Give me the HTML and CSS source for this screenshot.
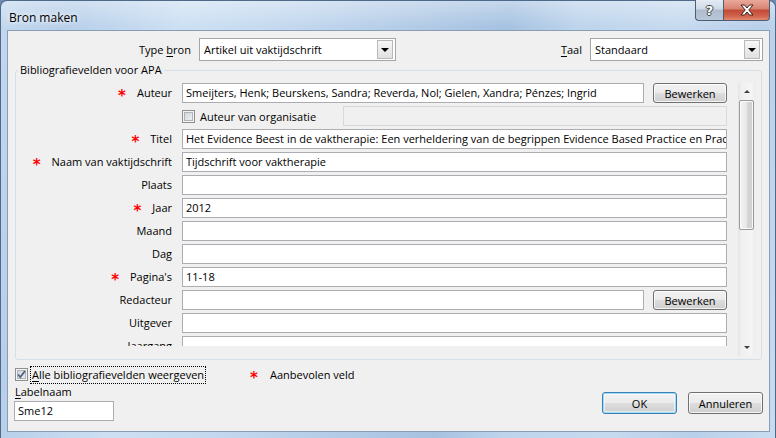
FILE: index.html
```html
<!DOCTYPE html>
<html lang="nl">
<head>
<meta charset="utf-8">
<title>Bron maken</title>
<link rel="stylesheet" href="styles.css">
</head>
<body>
<div class="window">
  <div class="titlebar">
    <span class="title">Bron maken</span>
    <div class="caption">
      <div class="cap-btn help">?</div>
      <div class="cap-btn close">
        <svg width="16" height="12" viewBox="0 0 16 12"><path d="M2 1h3.5L8 4l2.5-3H14L9.8 6 14 11h-3.5L8 8l-2.5 3H2l4.2-5z" fill="#fff" stroke="#3b2220" stroke-width="1"/></svg>
      </div>
    </div>
  </div>
  <div class="client">
    <div class="top-row">
      <label class="top-label type-label">Type <u>b</u>ron</label>
      <div class="combo combo-type"><span class="combo-text">Artikel uit vaktijdschrift</span><span class="drop"></span></div>
      <label class="top-label taal-label"><u>T</u>aal</label>
      <div class="combo combo-taal"><span class="combo-text">Standaard</span><span class="drop"></span></div>
    </div>
    <fieldset class="group">
      <legend>Bibliografievelden voor APA</legend>
      <div class="scrollwrap">
        <div class="fields">
          <span class="lbl"><span class="req">*</span>Auteur</span>
          <div class="ctrl split"><div class="tb">Smeijters, Henk; Beurskens, Sandra; Reverda, Nol; Gielen, Xandra; Pénzes; Ingrid</div><div class="btn">Bewerken</div></div>

          <span class="lbl"></span>
          <div class="ctrl org"><span class="chk-wrap"><span class="chk"></span>Auteur van organisatie</span><div class="tb disabled"></div></div>

          <span class="lbl"><span class="req">*</span>Titel</span>
          <div class="ctrl"><div class="tb">Het Evidence Beest in de vaktherapie: Een verheldering van de begrippen Evidence Based Practice en Practice Based Evidence</div></div>

          <span class="lbl"><span class="req">*</span>Naam van vaktijdschrift</span>
          <div class="ctrl"><div class="tb">Tijdschrift voor vaktherapie</div></div>

          <span class="lbl">Plaats</span>
          <div class="ctrl"><div class="tb"></div></div>

          <span class="lbl"><span class="req">*</span>Jaar</span>
          <div class="ctrl"><div class="tb">2012</div></div>

          <span class="lbl">Maand</span>
          <div class="ctrl"><div class="tb"></div></div>

          <span class="lbl">Dag</span>
          <div class="ctrl"><div class="tb"></div></div>

          <span class="lbl"><span class="req">*</span>Pagina's</span>
          <div class="ctrl"><div class="tb">11-18</div></div>

          <span class="lbl">Redacteur</span>
          <div class="ctrl split"><div class="tb"></div><div class="btn">Bewerken</div></div>

          <span class="lbl">Uitgever</span>
          <div class="ctrl"><div class="tb"></div></div>

          <span class="lbl">Jaargang</span>
          <div class="ctrl"><div class="tb"></div></div>

          <span class="lbl">Nummer</span>
          <div class="ctrl"><div class="tb"></div></div>
        </div>
        <div class="vscroll">
          <div class="sb-arrow up"></div>
          <div class="sb-track">
            <div class="sb-thumb"></div>
          </div>
          <div class="sb-arrow down"></div>
        </div>
      </div>
    </fieldset>
    <div class="bottom">
      <div class="bottom-left">
        <div class="show-row">
          <span class="chk-wrap main-chk"><span class="chk checked"><svg width="9" height="9" viewBox="0 0 9 9"><path d="M1 4.5l2.3 2.5L8 1" fill="none" stroke="#4d6185" stroke-width="1.8"/></svg></span><span class="focus"><u>A</u>lle bibliografievelden weergeven</span></span>
          <span class="note"><span class="req">*</span>Aanbevolen veld</span>
        </div>
        <label class="lbl-naam"><u>L</u>abelnaam</label>
        <div class="tb tb-naam">Sme12</div>
      </div>
      <div class="buttons">
        <div class="btn big default">OK</div>
        <div class="btn big">Annuleren</div>
      </div>
    </div>
  </div>
</div>
</body>
</html>
```

FILE: styles.css
```css
* { box-sizing: border-box; }
html, body { margin: 0; padding: 0; }
body {
  width: 776px;
  height: 438px;
  overflow: hidden;
  background: #6e8bb0;
  font-family: "Open Sans", "Noto Sans", sans-serif;
  font-size: 11px;
  color: #000;
}
u { text-decoration-thickness: 1px; text-underline-offset: 2px; }

.window {
  width: 776px;
  height: 438px;
  display: flex;
  flex-direction: column;
  padding: 0 5px 6px 6px;
  border-radius: 7px 7px 0 0;
  border: 1px solid #4f6a88;
  border-bottom: 0;
  background:
    linear-gradient(to bottom, rgba(255,255,255,0.35), rgba(255,255,255,0) 26px),
    linear-gradient(100deg, #c3d8ef 0%, #b7cfea 8%, #cde0f3 22%, #c2d7ee 36%, #b4cce7 48%, #a6c2e1 60%, #bdd4ec 68%, #c6daef 80%, #b9d0ea 90%, #c8dcf1 100%);
}

.titlebar {
  height: 29px;
  display: flex;
  align-items: flex-start;
  flex: none;
}
.title {
  margin-top: 8px;
  margin-left: 2px;
  font-size: 12px;
  color: #000;
  text-shadow: 0 0 8px rgba(255,255,255,0.9), 0 0 4px rgba(255,255,255,0.9);
}
.caption {
  margin-left: auto;
  margin-right: 0;
  margin-top: -1px;
  display: flex;
}
.cap-btn {
  height: 21px;
  display: flex;
  align-items: center;
  justify-content: center;
  border: 1px solid #4e5d70;
  border-top: 0;
}
.help {
  width: 28px;
  border-radius: 0 0 0 4px;
  border-right: 0;
  background: linear-gradient(#e3ebf4 0%, #cfdae7 45%, #aebccd 50%, #b9c8d8 100%);
  color: #fff;
  font-family: "DejaVu Sans", sans-serif;
  font-weight: bold;
  font-size: 13px;
  text-shadow: -1px 0 #444, 1px 0 #444, 0 -1px #444, 0 1px #444;
}
.close {
  width: 47px;
  border-radius: 0 0 4px 0;
  background: linear-gradient(#e9a99b 0%, #d98172 45%, #c24a35 50%, #d0624c 80%, #e28a6f 100%);
}

.client {
  flex: 1;
  background: #f0f0f0;
  border: 1px solid #8a9db3;
  display: flex;
  flex-direction: column;
}

/* top row */
.top-row {
  display: flex;
  align-items: center;
  height: 23px;
  margin-top: 7px;
  padding-right: 6px;
}
.top-label { white-space: nowrap; }
.type-label { margin-left: 131px; margin-right: 8px; }
.taal-label { margin-left: auto; margin-right: 8px; }
.combo {
  height: 23px;
  border: 1px solid #a5a5a5;
  background: #fff;
  display: flex;
  align-items: center;
  padding: 1px 2px 1px 4px;
}
.combo-type { width: 197px; }
.combo-taal { width: 173px; }
.combo-text { flex: 1; }
.drop {
  width: 16px;
  height: 19px;
  border: 1px solid #b9b9b9;
  background: linear-gradient(#f7f7f7, #e1e1e1);
  display: flex;
  align-items: center;
  justify-content: center;
}
.drop::after {
  content: "";
  border-left: 4px solid transparent;
  border-right: 4px solid transparent;
  border-top: 4px solid #000;
}

/* group */
.group {
  margin: 1px 7px 0 7px;
  padding: 5px 6px 3px 0;
  border: 1px solid #d5dfe5;
  border-radius: 3px;
  min-width: 0;
}
.group legend {
  padding: 0 2px;
  margin-left: 2px;
  line-height: 16px;
}
.scrollwrap {
  display: flex;
  align-items: flex-start;
}
.fields {
  width: 722px;
  height: 263px;
  overflow: hidden;
  display: grid;
  grid-template-columns: 156px 545px;
  grid-auto-rows: 20px;
  column-gap: 10px;
  row-gap: 3px;
  align-content: start;
}
.lbl {
  display: flex;
  align-items: center;
  justify-content: flex-end;
  white-space: nowrap;
  line-height: 16px;
}
.req {
  color: #f00;
  font-family: "DejaVu Sans", sans-serif;
  font-weight: bold;
  font-size: 15px;
  line-height: 12px;
  margin-right: 11px;
  padding-top: 6px;
}
.ctrl { display: flex; }
.ctrl > .tb { flex: 1; }
.split { gap: 9px; }
.split > .btn { width: 74px; height: 20px; flex: none; }
.org { display: grid; grid-template-columns: 161px 1fr; }

.tb {
  height: 20px;
  border: 1px solid #abadb3;
  background: #fff;
  padding: 0 3px;
  line-height: 18px;
  white-space: nowrap;
  overflow: hidden;
}
.tb.disabled { background: #f0f0f0; border-color: #d6d9de; }

.btn {
  border: 1px solid #707070;
  border-radius: 3px;
  background: linear-gradient(#f2f2f2 0%, #ebebeb 48%, #dddddd 52%, #cfcfcf 100%);
  box-shadow: inset 0 0 0 1px rgba(255,255,255,0.75);
  display: flex;
  align-items: center;
  justify-content: center;
  color: #000;
}

.chk-wrap {
  display: flex;
  align-items: center;
  white-space: nowrap;
}
.chk {
  width: 13px;
  height: 13px;
  flex: none;
  border: 1px solid #8e8f8f;
  background: linear-gradient(135deg, #cbcfd5, #f6f6f6);
  box-shadow: inset 0 0 0 1px #f4f4f4, inset 0 0 0 2px #aeb3b9;
  margin-right: 5px;
  display: flex;
  align-items: center;
  justify-content: center;
}

/* scrollbar */
.vscroll {
  width: 17px;
  height: 273px;
  display: flex;
  flex-direction: column;
  background: linear-gradient(to right, #e3e3e3, #f0f0f0 20%, #f5f5f5 80%, #ececec);
}
.sb-arrow {
  height: 17px;
  flex: none;
  display: flex;
  align-items: center;
  justify-content: center;
}
.sb-arrow.up::after {
  content: "";
  border-left: 3px solid transparent;
  border-right: 3px solid transparent;
  border-bottom: 3px solid #404040;
}
.sb-arrow.down::after {
  content: "";
  border-left: 3px solid transparent;
  border-right: 3px solid transparent;
  border-top: 3px solid #404040;
}
.sb-track { flex: 1; }
.sb-thumb {
  height: 130px;
  margin: 0 1px;
  border: 1px solid #999;
  border-radius: 2px;
  background: linear-gradient(to right, #f3f3f3, #e8e8e8 50%, #d6d6d6 52%, #d0d0d0);
  box-shadow: inset 0 0 0 1px rgba(255,255,255,0.8);
}

/* bottom */
.bottom {
  flex: 1;
  display: flex;
  padding: 5px 6px 0 7px;
}
.bottom-left {
  display: flex;
  flex-direction: column;
}
.show-row {
  display: flex;
  align-items: center;
  height: 19px;
}
.main-chk .chk { margin-right: 2px; }
.focus {
  border: 1px dotted #000;
  padding: 0 1px;
  line-height: 16px;
}
.note {
  margin-left: 44px;
  display: flex;
  align-items: center;
}
.note .req { margin-right: 12px; }
.lbl-naam {
  line-height: 16px;
}
.tb-naam {
  margin-top: 1px;
  margin-left: -1px;
  width: 100px;
}
.buttons {
  margin-left: auto;
  margin-top: 27px;
  display: flex;
  gap: 11px;
  align-self: flex-start;
}
.btn.big { width: 75px; height: 22px; }
.btn.default {
  border-color: #3c7fb1;
  box-shadow: inset 0 0 0 1px #9bdcf8, inset 0 0 0 2px rgba(255,255,255,0.5);
}
```
